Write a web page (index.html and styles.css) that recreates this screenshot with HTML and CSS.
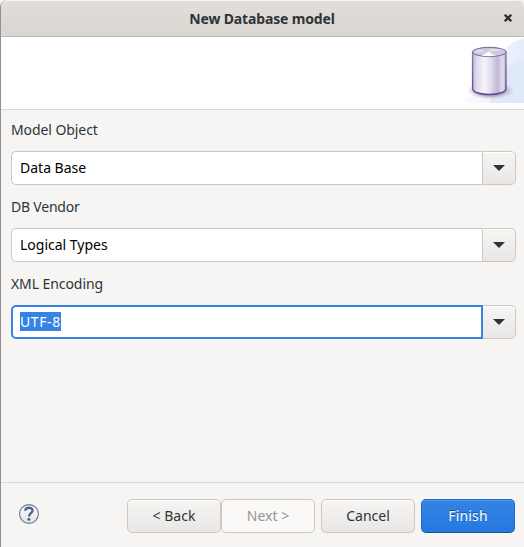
FILE: index.html
```html
<!DOCTYPE html>
<html lang="en">
<head>
<meta charset="utf-8">
<title>New Database model</title>
<link rel="stylesheet" href="styles.css">
</head>
<body>
<div class="dialog">
  <header class="titlebar">
    <h1 class="title">New Database model</h1>
    <svg class="close" width="10" height="10" viewBox="0 0 10 10"><path d="M1.7 1.7 8.3 8.3M8.3 1.7 1.7 8.3" stroke="#2a2f30" stroke-width="2.3"/></svg>
  </header>
  <div class="banner">
    <svg width="80" height="72" viewBox="444 37 80 72">
      <defs>
        <linearGradient id="glow"><stop offset="0" stop-color="#fff"/><stop offset=".45" stop-color="#f3f7fe"/><stop offset="1" stop-color="#e5edfb"/></linearGradient>
        <linearGradient id="side"><stop offset="0" stop-color="#c3bada"/><stop offset=".12" stop-color="#dedaea"/><stop offset=".36" stop-color="#f5f4fa"/><stop offset=".55" stop-color="#e0dcec"/><stop offset=".75" stop-color="#c0b8d6"/><stop offset=".9" stop-color="#e4dff0"/><stop offset="1" stop-color="#b8acd5"/></linearGradient>
        <linearGradient id="rim" x1="0" y1="0" x2="0" y2="1"><stop offset="0" stop-color="#8d82ad"/><stop offset="1" stop-color="#5f4798"/></linearGradient>
        <radialGradient id="shade"><stop offset=".6" stop-color="#b9a7bd"/><stop offset="1" stop-color="#d5c9dc" stop-opacity="0"/></radialGradient>
      </defs>
      <path d="M452 103C468 100 478 93 484 80C492 58 506 43 524 38V103Z" fill="url(#glow)"/>
      <path d="M490 103C492 76 506 61 524 59V103Z" fill="#dde7f9" opacity=".8"/>
      <ellipse cx="491" cy="90.5" rx="24" ry="9" fill="url(#shade)"/>
      <path d="M472.6 52V88.500C472.6 96.500 506 96.500 506 88.500V52Z" fill="url(#side)" stroke="url(#rim)" stroke-width="1.4"/>
      <ellipse cx="489.3" cy="52" rx="16.600" ry="4.600" fill="#d0cae0" stroke="#8074a8" stroke-width="1.2"/>
      <path d="M474.500 53Q481 51 488 52L504 50Q500 48.500 491 49L488 52L479 49.500Q475 50 474.500 53Z" fill="#e2deeb"/>
      <path d="M481.500 55.500Q486 53.500 488.500 51.500Q491 54 496 55.500Q489 57 481.500 55.500Z" fill="#fff"/>
    </svg>
  </div>
  <main class="form">
    <label class="label tight">Model Object</label>
    <div class="combo"><div class="entry">Data Base</div><div class="drop"><i class="arrow"></i></div></div>
    <label class="label tighter">DB Vendor</label>
    <div class="combo"><div class="entry">Logical Types</div><div class="drop"><i class="arrow"></i></div></div>
    <label class="label tight">XML Encoding</label>
    <div class="combo focused"><div class="entry"><span class="selected">UTF-8</span></div><div class="drop"><i class="arrow"></i></div></div>
  </main>
  <footer class="actions">
    <svg class="help" width="22" height="22" viewBox="0 0 22 22">
      <defs><linearGradient id="disc" x1="0" y1="0" x2="0" y2="1"><stop offset="0" stop-color="#fff"/><stop offset="1" stop-color="#e4e4e6"/></linearGradient></defs>
      <circle cx="11" cy="11" r="9.4" fill="url(#disc)" stroke="#63779b" stroke-width="1.1"/>
      <path d="M7.3 7.8C7.3 3.7 14.6 3.8 14.6 7.6C14.6 10.3 11 10.1 11 13.4" fill="none" stroke="#4f648d" stroke-width="2.4"/>
      <circle cx="10.9" cy="16.3" r="1.5" fill="#4f648d"/>
    </svg>
    <div class="nav">
      <button class="button">&lt; Back</button>
      <button class="button" disabled>Next &gt;</button>
    </div>
    <button class="button">Cancel</button>
    <button class="button primary">Finish</button>
  </footer>
</div>
</body>
</html>
```
FILE: styles.css
```css
* { box-sizing: border-box; }
body {
  margin: 0;
  background: #f6f5f4;
  color: #2e3436;
  font: 14px/20px "Noto Sans", "Open Sans", sans-serif;
}
.dialog {
  display: flex;
  flex-direction: column;
  width: 524px;
  height: 547px;
  overflow: hidden;
  border-left: 1px solid #929190;
  border-radius: 7px 7px 0 0;
}
.titlebar {
  display: grid;
  grid-template-columns: 1fr auto;
  align-items: center;
  height: 37px;
  flex: none;
  padding-right: 11px;
  background: linear-gradient(#e1dedb, #dad6d2);
  border-bottom: 1px solid #bfb8b1;
  box-shadow: inset 0 1px #f4f3f2;
}
.title {
  margin: 0 0 0 20px;
  padding-top: 2px;
  text-align: center;
  font-size: 14px;
  line-height: 20px;
  font-weight: 700;
  letter-spacing: -.15px;
}
.close { display: block; }
.banner {
  display: flex;
  justify-content: flex-end;
  height: 73px;
  flex: none;
  background: #fff;
  border-bottom: 1px solid #dcdad8;
}
.form { flex: 1; padding: 10px 8px 0 10px; }
.label { display: block; height: 31px; }
.tight { letter-spacing: -.08px; }
.tighter { letter-spacing: -.22px; }
.combo { display: flex; height: 34px; margin-bottom: 12px; }
.entry {
  flex: 1;
  display: flex;
  align-items: center;
  padding-left: 8px;
  color: #000;
  background: #fff;
  border: 1px solid #cdc7c2;
  border-right: 0;
  border-radius: 5px 0 0 5px;
}
.drop {
  display: flex;
  align-items: center;
  justify-content: center;
  width: 34px;
  background: linear-gradient(#f6f5f4, #e9e7e5);
  border: 1px solid #cdc7c2;
  border-radius: 0 5px 5px 0;
  box-shadow: inset 0 1px #fff;
}
.arrow {
  border: 6px solid transparent;
  border-top-color: #2e3436;
  border-bottom: 0;
}
.focused .entry { border: 2px solid #3584e4; padding: 0 0 1px 7px; }
.focused .drop { border-left: 0; width: 33px; }
.selected {
  height: 19px;
  line-height: 19px;
  letter-spacing: .6px;
  color: #fff;
  background: #3584e4;
}
.actions {
  display: flex;
  align-items: flex-start;
  height: 65px;
  flex: none;
  padding: 16px 9px 0 17px;
  border-top: 1px solid #dcdad8;
}
.help { margin-top: 4px; }
.nav { display: flex; margin: 0 6px 0 auto; }
.button {
  width: 94px;
  height: 34px;
  padding: 0;
  font: inherit;
  color: #2e3436;
  background: linear-gradient(#f6f5f4, #e9e7e5);
  border: 1px solid #cdc7c2;
  border-radius: 5px;
  box-shadow: inset 0 1px #fff;
}
.button:disabled { color: #929595; background: #faf9f8; box-shadow: none; }
.primary {
  margin-left: 6px;
  color: #fff;
  letter-spacing: .15px;
  background: linear-gradient(#3584e4, #2379e2);
  border-color: #1b6acb;
  border-bottom-color: #155099;
  box-shadow: inset 0 1px #5799e8;
  text-shadow: 0 -1px rgba(0, 0, 0, .45);
}
```
